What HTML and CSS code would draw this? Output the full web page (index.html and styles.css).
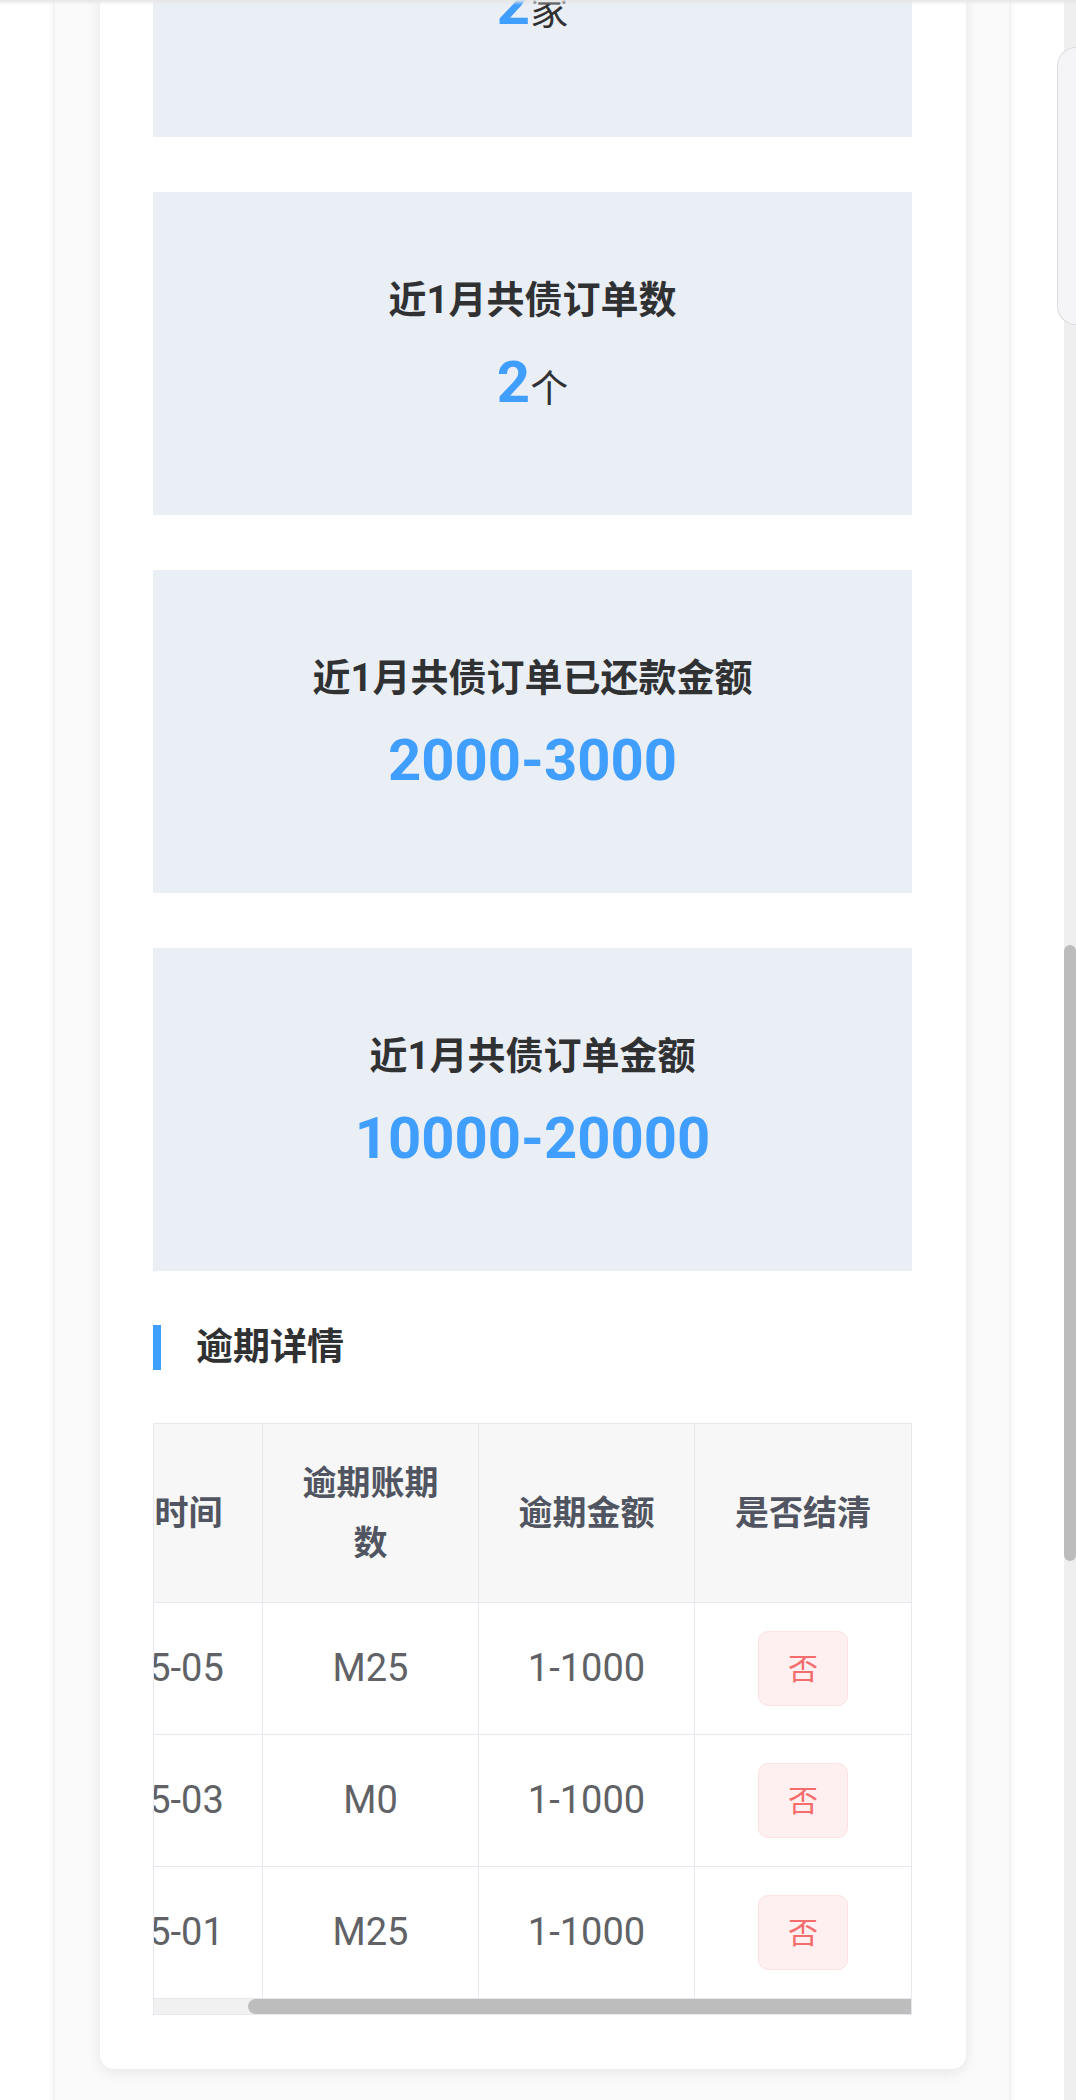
FILE: index.html
```html
<!DOCTYPE html>
<html lang="zh-CN">
<head>
  <meta charset="UTF-8">
  <title>共债报告</title>
  <link rel="stylesheet" href="styles.css">
</head>
<body>
  <div class="screen">
    <div class="page" id="page">
      <div class="shell">
        <div class="card">
          <div class="stat" id="firstStat">
            <div class="stat-title">近1月共债机构数</div>
            <div class="stat-value"><b>2</b><span>家</span></div>
          </div>
          <div class="stat">
            <div class="stat-title">近1月共债订单数</div>
            <div class="stat-value"><b>2</b><span>个</span></div>
          </div>
          <div class="stat">
            <div class="stat-title">近1月共债订单已还款金额</div>
            <div class="stat-value"><b>2000-3000</b></div>
          </div>
          <div class="stat">
            <div class="stat-title">近1月共债订单金额</div>
            <div class="stat-value"><b>10000-20000</b></div>
          </div>

          <div class="section-head">
            <i class="bar"></i>
            <h2>逾期详情</h2>
          </div>

          <div class="table-box">
            <div class="table-wrap" id="overdueWrap">
              <table class="overdue">
                <colgroup><col><col><col><col></colgroup>
                <thead>
                  <tr>
                    <th>逾期时间</th>
                    <th>逾期账期数</th>
                    <th>逾期金额</th>
                    <th>是否结清</th>
                  </tr>
                </thead>
                <tbody id="overdueBody"></tbody>
              </table>
            </div>
            <div class="hscroll"><div class="hscroll-thumb" id="hThumb"></div></div>
          </div>
        </div>
      </div>
    </div>

    <div class="vbar"><div class="vbar-thumb"></div></div>
    <div class="side-tab"></div>
    <div class="top-shade"></div>
  </div>

  <script>
    const overdue = [
      { time: "2025-05", period: "M25", amount: "1-1000", settled: false },
      { time: "2025-03", period: "M0", amount: "1-1000", settled: false },
      { time: "2025-01", period: "M25", amount: "1-1000", settled: false }
    ];

    const body = document.getElementById('overdueBody');
    overdue.forEach(row => {
      const tr = document.createElement('tr');
      tr.innerHTML = `<td>${row.time}</td><td>${row.period}</td><td>${row.amount}</td>` +
        `<td><span class="tag ${row.settled ? 'tag-ok' : ''}">${row.settled ? '是' : '否'}</span></td>`;
      body.appendChild(tr);
    });

    // table is scrolled all the way right, draw the scroll bar to match
    const wrap = document.getElementById('overdueWrap');
    wrap.scrollLeft = wrap.scrollWidth;
    const thumb = document.getElementById('hThumb');
    const track = wrap.clientWidth;
    thumb.style.width = (track * wrap.clientWidth / wrap.scrollWidth) + 'px';
    thumb.style.marginLeft = (track * wrap.scrollLeft / wrap.scrollWidth) + 'px';

    // page is scrolled so the first card ends near the top
    const page = document.getElementById('page');
    const first = document.getElementById('firstStat');
    page.scrollTop = first.getBoundingClientRect().bottom - 137;
  </script>
</body>
</html>
```

FILE: styles.css
```css
body {
  margin: 0;
  font-family: Roboto, "Noto Sans CJK SC", sans-serif;
  background: #fff;
  color: #303133;
}

.screen {
  position: relative;
  display: flex;
  height: 2100px;
  overflow: hidden;
}

.page {
  flex: 1;
  height: 100%;
  overflow: hidden;
}

.shell {
  margin: 0 55px;
  padding: 40px 43px 120px 45px;
  background: #fafafa;
  box-shadow: 0 0 6px rgba(0, 0, 0, 0.12);
}

.card {
  background: #fff;
  border-radius: 14px;
  padding: 53px 54px 54px 53px;
  box-shadow: 0 4px 14px rgba(0, 0, 0, 0.08);
}

.stat {
  height: 323px;
  background: #eaeef5;
  display: flex;
  flex-direction: column;
  align-items: center;
  justify-content: center;
  gap: 22px;
}

.stat + .stat {
  margin-top: 55px;
}

.stat-title {
  font-size: 38px;
  line-height: 50px;
  font-weight: 700;
  color: #303133;
}

.stat-value {
  line-height: 70px;
}

.stat-value b {
  font-size: 58px;
  font-weight: 700;
  color: #409eff;
}

.stat-value span {
  font-size: 38px;
  color: #303133;
}

.section-head {
  display: flex;
  align-items: center;
  margin-top: 54px;
  height: 45px;
}

.section-head .bar {
  width: 8px;
  height: 45px;
  background: #409eff;
}

.section-head h2 {
  margin: 0 0 0 35px;
  font-size: 37px;
  line-height: 45px;
  font-weight: 700;
  color: #303133;
}

.table-box {
  margin-top: 53px;
  border: 1px solid #e6e8ed;
}

.table-wrap {
  overflow: hidden;
}

.hscroll {
  height: 15px;
  background: #f1f1f1;
}

.hscroll-thumb {
  height: 100%;
  border-radius: 8px 0 0 8px;
  background: #bdbdbd;
}

.overdue {
  width: 864px;
  table-layout: fixed;
  border-collapse: separate;
  border-spacing: 0;
  text-align: center;
}

.overdue col {
  width: 216px;
}

.overdue th,
.overdue td {
  border-right: 1px solid #e6e8ed;
  border-bottom: 1px solid #e6e8ed;
}

.overdue th:last-child,
.overdue td:last-child {
  border-right: none;
}

.overdue th {
  padding: 29px 24px;
  font-size: 34px;
  line-height: 60px;
  font-weight: 700;
  color: #515561;
  background: #f7f7f8;
}

.overdue td {
  padding: 28px 24px;
  height: 75px;
  font-size: 38px;
  line-height: 75px;
  color: #606266;
  white-space: nowrap;
}

.tag {
  display: inline-block;
  box-sizing: border-box;
  height: 75px;
  line-height: 73px;
  padding: 0 29px;
  font-size: 30px;
  color: #f56c6c;
  background: #fef0f0;
  border: 1px solid #fde2e2;
  border-radius: 10px;
  vertical-align: top;
}

.tag-ok {
  color: #67c23a;
  background: #f0f9eb;
  border-color: #e1f3d8;
}

.vbar {
  width: 12px;
  height: 100%;
  background: #efefef;
}

.vbar-thumb {
  margin-top: 945px;
  height: 616px;
  border-radius: 6px;
  background: #bcbcbc;
}

.side-tab {
  position: absolute;
  top: 47px;
  right: 0;
  width: 19px;
  height: 278px;
  box-sizing: border-box;
  background: #f5f5f7;
  border: 1px solid #dcdcdf;
  border-right: none;
  border-radius: 30px 0 0 30px;
}

.top-shade {
  position: absolute;
  top: 0;
  left: 0;
  right: 0;
  height: 5px;
  background: linear-gradient(#e6e6e6, rgba(230, 230, 230, 0));
}
```
